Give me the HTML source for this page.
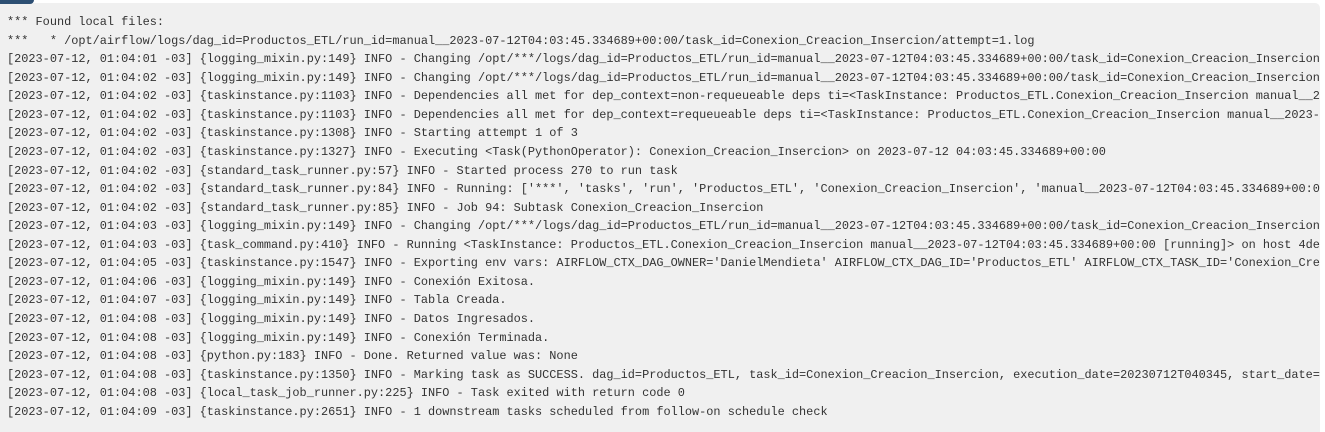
<!DOCTYPE html>
<html><head><meta charset="utf-8"><style>
html,body{margin:0;padding:0;width:1325px;height:432px;background:#fff;overflow:hidden}
.tab{position:absolute;left:0;top:0;width:34px;height:4px;background:#2d4f73;border-radius:0 0 4px 0}
.panel{position:absolute;left:0;top:3px;width:1320px;height:429px;background:#f0f0f0;border-radius:0 5px 0 0;overflow:hidden}
pre{margin:0;padding:10px 0 0 7px;font-family:"Liberation Mono",monospace;font-size:11.9px;line-height:18.57px;color:#333;white-space:pre}
</style></head><body>
<div class="panel"><pre>*** Found local files:
***   * /opt/airflow/logs/dag_id=Productos_ETL/run_id=manual__2023-07-12T04:03:45.334689+00:00/task_id=Conexion_Creacion_Insercion/attempt=1.log
[2023-07-12, 01:04:01 -03] {logging_mixin.py:149} INFO - Changing /opt/***/logs/dag_id=Productos_ETL/run_id=manual__2023-07-12T04:03:45.334689+00:00/task_id=Conexion_Creacion_Insercion
[2023-07-12, 01:04:02 -03] {logging_mixin.py:149} INFO - Changing /opt/***/logs/dag_id=Productos_ETL/run_id=manual__2023-07-12T04:03:45.334689+00:00/task_id=Conexion_Creacion_Insercion
[2023-07-12, 01:04:02 -03] {taskinstance.py:1103} INFO - Dependencies all met for dep_context=non-requeueable deps ti=&lt;TaskInstance: Productos_ETL.Conexion_Creacion_Insercion manual__2023
[2023-07-12, 01:04:02 -03] {taskinstance.py:1103} INFO - Dependencies all met for dep_context=requeueable deps ti=&lt;TaskInstance: Productos_ETL.Conexion_Creacion_Insercion manual__2023-07
[2023-07-12, 01:04:02 -03] {taskinstance.py:1308} INFO - Starting attempt 1 of 3
[2023-07-12, 01:04:02 -03] {taskinstance.py:1327} INFO - Executing &lt;Task(PythonOperator): Conexion_Creacion_Insercion&gt; on 2023-07-12 04:03:45.334689+00:00
[2023-07-12, 01:04:02 -03] {standard_task_runner.py:57} INFO - Started process 270 to run task
[2023-07-12, 01:04:02 -03] {standard_task_runner.py:84} INFO - Running: ['***', 'tasks', 'run', 'Productos_ETL', 'Conexion_Creacion_Insercion', 'manual__2023-07-12T04:03:45.334689+00:00'
[2023-07-12, 01:04:02 -03] {standard_task_runner.py:85} INFO - Job 94: Subtask Conexion_Creacion_Insercion
[2023-07-12, 01:04:03 -03] {logging_mixin.py:149} INFO - Changing /opt/***/logs/dag_id=Productos_ETL/run_id=manual__2023-07-12T04:03:45.334689+00:00/task_id=Conexion_Creacion_Insercion
[2023-07-12, 01:04:03 -03] {task_command.py:410} INFO - Running &lt;TaskInstance: Productos_ETL.Conexion_Creacion_Insercion manual__2023-07-12T04:03:45.334689+00:00 [running]&gt; on host 4de
[2023-07-12, 01:04:05 -03] {taskinstance.py:1547} INFO - Exporting env vars: AIRFLOW_CTX_DAG_OWNER='DanielMendieta' AIRFLOW_CTX_DAG_ID='Productos_ETL' AIRFLOW_CTX_TASK_ID='Conexion_Cre
[2023-07-12, 01:04:06 -03] {logging_mixin.py:149} INFO - Conexión Exitosa.
[2023-07-12, 01:04:07 -03] {logging_mixin.py:149} INFO - Tabla Creada.
[2023-07-12, 01:04:08 -03] {logging_mixin.py:149} INFO - Datos Ingresados.
[2023-07-12, 01:04:08 -03] {logging_mixin.py:149} INFO - Conexión Terminada.
[2023-07-12, 01:04:08 -03] {python.py:183} INFO - Done. Returned value was: None
[2023-07-12, 01:04:08 -03] {taskinstance.py:1350} INFO - Marking task as SUCCESS. dag_id=Productos_ETL, task_id=Conexion_Creacion_Insercion, execution_date=20230712T040345, start_date=
[2023-07-12, 01:04:08 -03] {local_task_job_runner.py:225} INFO - Task exited with return code 0
[2023-07-12, 01:04:09 -03] {taskinstance.py:2651} INFO - 1 downstream tasks scheduled from follow-on schedule check</pre></div>
<div class="tab"></div>
</body></html>
